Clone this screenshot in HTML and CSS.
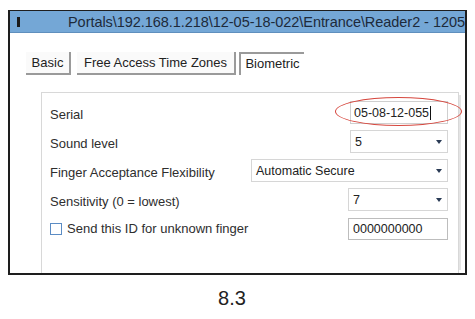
FILE: index.html
```html
<!DOCTYPE html>
<html>
<head>
<meta charset="utf-8">
<link rel="stylesheet" href="styles.css">
</head>
<body>
<div class="window">
  <div class="titlebar">
    <span class="ticon"></span>
    <span class="ttext">Portals\192.168.1.218\12-05-18-022\Entrance\Reader2 - 1205</span>
  </div>
  <div class="content">
    <div class="tabs">
      <div class="tab t1">Basic</div>
      <div class="tab t2">Free Access Time Zones</div>
      <div class="tab t3 active">Biometric</div>
    </div>
    <div class="panel">
      <div class="row">
        <span class="label">Serial</span>
        <span class="field small input-wrap">
          <span class="input">05-08-12-055<span class="caret"></span></span>
          <span class="oval"></span>
        </span>
      </div>
      <div class="row">
        <span class="label">Sound level</span>
        <span class="field small select"><span>5</span><span class="arrow"></span></span>
      </div>
      <div class="row">
        <span class="label">Finger Acceptance Flexibility</span>
        <span class="field wide select"><span>Automatic Secure</span><span class="arrow"></span></span>
      </div>
      <div class="row">
        <span class="label">Sensitivity (0 = lowest)</span>
        <span class="field small2 select"><span>7</span><span class="arrow"></span></span>
      </div>
      <div class="row">
        <span class="label check"><span class="box"></span>Send this ID for unknown finger</span>
        <span class="field small2 textbox">0000000000</span>
      </div>
    </div>
  </div>
</div>
<div class="caption">8.3</div>
</body>
</html>
```
FILE: styles.css
```css
* { box-sizing: border-box; }
body { margin: 0; background: #fff; font-family: "Liberation Sans", Arial, sans-serif; width: 475px; height: 319px; overflow: hidden; }
.window { margin: 10px 0 0 8px; width: 459px; height: 265px; border: 2px solid #1e1e1e; border-top-width: 1px; background: #fff; display: flex; flex-direction: column; }
.titlebar { height: 22px; background: #74a7d6; display: flex; align-items: center; border-bottom: 1px solid #5f8fbd; overflow: hidden; }
.ticon { width: 3px; height: 10px; background: #1a1a1a; margin-left: 7px; flex: none; }
.ttext { margin-left: 48px; font-size: 14.5px; color: #1d2a3a; letter-spacing: -0.05px; white-space: nowrap; }
.content { flex: 1; display: flex; flex-direction: column; padding: 19px 0 0 16px; }
.tabs { display: flex; height: 23px; }
.tab { font-size: 13px; color: #222; height: 23px; line-height: 22px; text-align: center; border-bottom: 2px solid #9a9a9a; border-right: 2px solid #9a9a9a; background: #fafafa; white-space: nowrap; }
.t1 { width: 45px; }
.t2 { width: 159px; margin-left: 6px; }
.t3 { width: 65px; margin-left: 3px; }
.tab.active { border: none; border-left: 2px solid #9a9a9a; border-top: 2px solid #9a9a9a; background: #fff; line-height: 20px; }
.panel { flex: 1; margin: 17px 6px 0 15px; border: 1px solid #d8d8d8; border-bottom: none; box-shadow: 5px 0 0 -3px #e4e4e4; padding: 8px 10px 0 8px; display: flex; flex-direction: column; gap: 6px; }
.row { display: flex; justify-content: space-between; align-items: center; height: 23px; font-size: 13px; color: #2e2e2e; }
.label { margin-top: 4px; white-space: nowrap; }
.check { display: flex; align-items: center; margin-top: 0; }
.box { width: 12px; height: 12px; border: 1px solid #5b8cc4; margin-right: 5px; background: #fff; }
.field { height: 23px; border: 1px solid #cfcfcf; display: flex; align-items: center; font-size: 12.5px; color: #222; padding-left: 4px; background: #fff; flex: none; }
.small { width: 98px; }
.small2 { width: 100px; }
.wide { width: 197px; padding-left: 4px; }
.select { justify-content: space-between; padding-right: 5px; border-color: #d6d6d6; }
.arrow { width: 0; height: 0; border-left: 3px solid transparent; border-right: 3px solid transparent; border-top: 4px solid #2a3b55; }
.input-wrap { position: relative; padding: 0; border: none; }
.input { width: 100%; height: 100%; border: 1px solid #cfcfcf; display: flex; align-items: center; padding-left: 3px; font-size: 12.5px; }
.caret { width: 1px; height: 14px; background: #111; margin-left: 1px; }
.textbox { height: 22px; border-color: #bdbdbd; }
.oval { position: absolute; left: -15px; top: -4px; width: 127px; height: 29px; border: 1px solid #d6473e; border-radius: 50%; pointer-events: none; }
.caption { text-align: center; width: 464px; margin-top: 12px; font-size: 20px; color: #222; }
```
